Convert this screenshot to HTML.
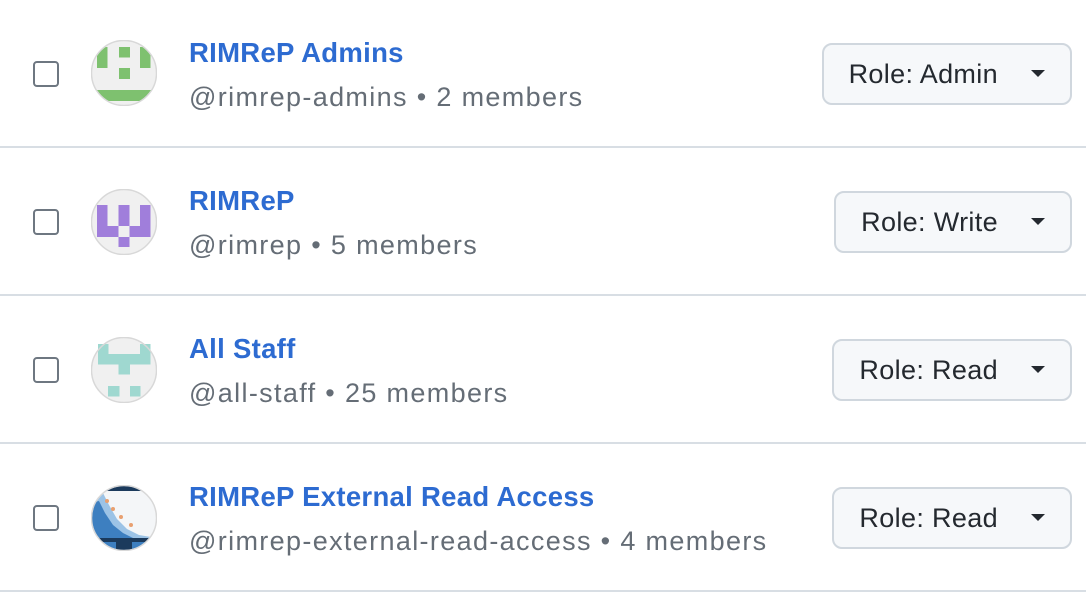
<!DOCTYPE html>
<html><head><meta charset="utf-8"><style>
*{margin:0;padding:0;box-sizing:border-box}
body{width:1086px;height:596px;background:#fff;font-family:"Liberation Sans",Helvetica,Arial,sans-serif;overflow:hidden;position:relative}
.row{position:absolute;left:0;width:1086px;height:148px;border-bottom:2px solid #d8dee4}
.cb{position:absolute;left:33px;top:61px;width:26px;height:26px;border:2.5px solid #6e7781;border-radius:4px;background:#fff}
.av{position:absolute;left:91px;top:40px;width:66px;height:66px}
.t{position:absolute;left:189px;top:37px;font-size:27.5px;font-weight:bold;color:#2d6bd1;letter-spacing:0.3px}
.s{position:absolute;left:189px;top:82px;font-size:27px;color:#656d76;letter-spacing:1.35px}
.btn{position:absolute;right:14px;top:43px;height:62px;border:2px solid #d0d7de;border-radius:10px;background:#f6f8fa;font-size:27px;letter-spacing:0.35px;color:#24292f;padding:0 0 0 25px;line-height:58px}
.btn .c{display:inline-block;width:0;height:0;border-left:7px solid transparent;border-right:7px solid transparent;border-top:7px solid #24292f;margin:0 25px 0 33px;vertical-align:middle;position:relative;top:-2px}
</style></head><body>

<div class="row" style="top:0">
<div class="cb"></div>
<svg class="av" viewBox="0 0 66 66"><defs><clipPath id="c1"><circle cx="33" cy="33" r="32"/></clipPath></defs>
<circle cx="33" cy="33" r="32" fill="#f0f0f0"/>
<g fill="#7ec16f" clip-path="url(#c1)">
<rect x="6" y="7" width="10.5" height="21"/><rect x="49" y="7" width="10.5" height="21"/>
<rect x="28" y="7" width="11" height="10.5"/><rect x="28" y="28" width="11" height="11"/>
<rect x="6" y="50" width="54" height="11"/></g>
<circle cx="33" cy="33" r="32.5" fill="none" stroke="#d8d8d8" stroke-width="1.5"/></svg>
<div class="t">RIMReP Admins</div>
<div class="s">@rimrep-admins • 2 members</div>
<div class="btn">Role: Admin<span class="c"></span></div>
</div>

<div class="row" style="top:148px">
<div class="cb"></div>
<svg class="av" viewBox="0 0 66 66" style="top:41px"><circle cx="33" cy="33" r="32" fill="#f0f0f0"/>
<g fill="#a07edb">
<rect x="6" y="16" width="10.5" height="32"/><rect x="27.5" y="16" width="11" height="21"/><rect x="49" y="16" width="10.5" height="32"/>
<rect x="6" y="37" width="21.5" height="11"/><rect x="38.5" y="37" width="21" height="11"/>
<rect x="27.5" y="48" width="11" height="10"/></g>
<circle cx="33" cy="33" r="32.5" fill="none" stroke="#d8d8d8" stroke-width="1.5"/></svg>
<div class="t">RIMReP</div>
<div class="s">@rimrep • 5 members</div>
<div class="btn">Role: Write<span class="c"></span></div>
</div>

<div class="row" style="top:296px">
<div class="cb"></div>
<svg class="av" viewBox="0 0 66 66" style="top:41px"><circle cx="33" cy="33" r="32" fill="#f0f0f0"/>
<g fill="#9fd8d0">
<rect x="7" y="7" width="10.5" height="11"/><rect x="49" y="7" width="10.5" height="11"/>
<rect x="7" y="17" width="52.5" height="10.5"/><rect x="27.5" y="27" width="11.5" height="10.5"/>
<rect x="17" y="49" width="11.5" height="10.5"/><rect x="39" y="49" width="10.5" height="10.5"/></g>
<circle cx="33" cy="33" r="32.5" fill="none" stroke="#d8d8d8" stroke-width="1.5"/></svg>
<div class="t">All Staff</div>
<div class="s">@all-staff • 25 members</div>
<div class="btn">Role: Read<span class="c"></span></div>
</div>

<div class="row" style="top:444px">
<div class="cb"></div>
<svg class="av" viewBox="0 0 66 66" style="top:41px"><defs><clipPath id="c4"><circle cx="33" cy="33" r="32"/></clipPath></defs>
<circle cx="33" cy="33" r="32" fill="#f4f6f8"/>
<g clip-path="url(#c4)">
<rect x="0" y="0" width="66" height="6" fill="#1b3a5c"/>
<path d="M0 10 L12 8 L18 20 L26 34 L36 44 L48 50 L60 52 L66 54 L66 66 L0 66Z" fill="#9cc3e6"/>
<path d="M0 18 L8 16 L14 28 L22 40 L32 48 L44 54 L66 58 L66 66 L0 66Z" fill="#3d7fc0"/>
<rect x="0" y="53" width="66" height="4" fill="#1b3a5c"/>
<rect x="25" y="56" width="16" height="10" fill="#1b3a5c"/>
<circle cx="16" cy="16" r="2" fill="#e8a070"/><circle cx="22" cy="24" r="2" fill="#e8a070"/><circle cx="30" cy="32" r="2" fill="#e8a070"/><circle cx="40" cy="40" r="2" fill="#e8a070"/>
</g>
<circle cx="33" cy="33" r="32.5" fill="none" stroke="#d8d8d8" stroke-width="1.5"/></svg>
<div class="t">RIMReP External Read Access</div>
<div class="s">@rimrep-external-read-access • 4 members</div>
<div class="btn">Role: Read<span class="c"></span></div>
</div>

</body></html>
